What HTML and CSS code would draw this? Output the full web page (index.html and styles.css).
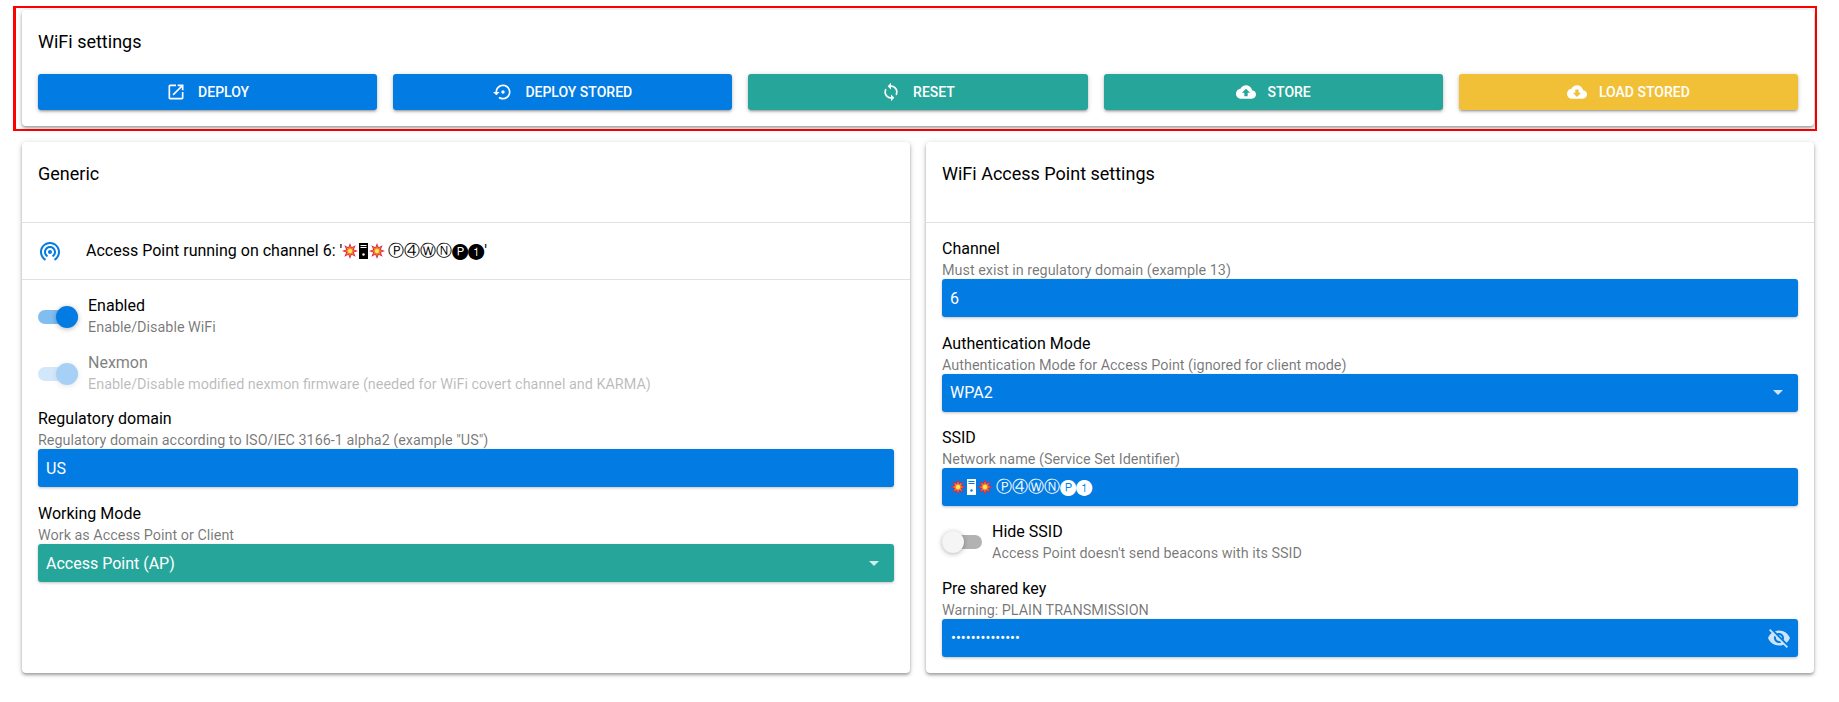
FILE: index.html
```html
<!DOCTYPE html>
<html lang="en">
<head>
  <meta charset="UTF-8">
  <meta name="viewport" content="width=device-width, initial-scale=1.0">
  <title>WiFi settings</title>
  <link rel="stylesheet" href="styles.css">
</head>
<body>
  <svg class="defs" aria-hidden="true">
    <symbol id="boom" viewBox="0 0 16 16">
      <polygon fill="#e02a4e" points="8,0 9.6,4.2 13.7,2.3 11.8,6.4 16,8 11.8,9.6 13.7,13.7 9.6,11.8 8,16 6.4,11.8 2.3,13.7 4.2,9.6 0,8 4.2,6.4 2.3,2.3 6.4,4.2"/>
      <polygon fill="#f58a1f" points="8,2.5 9,5.5 11.9,4.1 10.5,7 13.5,8 10.5,9 11.9,11.9 9,10.5 8,13.5 7,10.5 4.1,11.9 5.5,9 2.5,8 5.5,7 4.1,4.1 7,5.5"/>
      <circle fill="#ffe45c" cx="8" cy="8" r="2.2"/>
    </symbol>
  </svg>

  <div class="highlight">
    <section class="card top-card">
      <h2 class="top-title">WiFi settings</h2>
      <div class="actions">
        <button class="btn primary">
          <svg viewBox="0 0 24 24"><path d="M19 19H5V5h7V3H5c-1.11 0-2 .9-2 2v14c0 1.1.89 2 2 2h14c1.1 0 2-.9 2-2v-7h-2v7zM14 3v2h3.59l-9.83 9.83 1.41 1.41L19 6.41V10h2V3h-7z"/></svg>
          Deploy
        </button>
        <button class="btn primary">
          <svg viewBox="0 0 24 24"><path d="M14 12c0-1.1-.9-2-2-2s-2 .9-2 2 .9 2 2 2 2-.9 2-2zm-2-9c-4.97 0-9 4.03-9 9H0l4 4 4-4H5c0-3.87 3.13-7 7-7s7 3.13 7 7-3.13 7-7 7c-1.51 0-2.91-.49-4.06-1.3l-1.42 1.44C8.04 20.3 9.94 21 12 21c4.97 0 9-4.03 9-9s-4.03-9-9-9z"/></svg>
          Deploy Stored
        </button>
        <button class="btn secondary">
          <svg viewBox="0 0 24 24"><path d="M12 4V1L8 5l4 4V6c3.31 0 6 2.69 6 6 0 1.01-.25 1.97-.7 2.8l1.46 1.46C19.54 15.03 20 13.57 20 12c0-4.42-3.58-8-8-8zm0 14c-3.31 0-6-2.69-6-6 0-1.01.25-1.97.7-2.8L5.24 7.74C4.46 8.97 4 10.43 4 12c0 4.42 3.58 8 8 8v3l4-4-4-4v3z"/></svg>
          Reset
        </button>
        <button class="btn secondary">
          <svg viewBox="0 0 24 24"><path d="M19.35 10.04C18.67 6.59 15.64 4 12 4 9.11 4 6.6 5.64 5.35 8.04 2.34 8.36 0 10.91 0 14c0 3.31 2.69 6 6 6h13c2.76 0 5-2.24 5-5 0-2.64-2.05-4.78-4.65-4.96zM14 13v4h-4v-4H7l5-5 5 5h-3z"/></svg>
          Store
        </button>
        <button class="btn warning">
          <svg viewBox="0 0 24 24"><path d="M19.35 10.04C18.67 6.59 15.64 4 12 4 9.11 4 6.6 5.64 5.35 8.04 2.34 8.36 0 10.91 0 14c0 3.31 2.69 6 6 6h13c2.76 0 5-2.24 5-5 0-2.64-2.05-4.78-4.65-4.96zM17 13l-5 5-5-5h3V9h4v4h3z"/></svg>
          Load Stored
        </button>
      </div>
    </section>
  </div>

  <div class="columns">
    <section class="card">
      <h2 class="card-title">Generic</h2>
      <div class="status-row">
        <svg class="status-icon" viewBox="0 0 24 24"><path d="M12 11c-1.1 0-2 .9-2 2s.9 2 2 2 2-.9 2-2-.9-2-2-2zm6 2c0-3.31-2.69-6-6-6s-6 2.69-6 6c0 2.22 1.21 4.15 3 5.19l1-1.74c-1.19-.7-2-1.97-2-3.45 0-2.21 1.79-4 4-4s4 1.79 4 4c0 1.48-.81 2.75-2 3.45l1 1.74c1.79-1.04 3-2.97 3-5.19zM12 3C6.48 3 2 7.48 2 13c0 3.7 2.01 6.92 4.99 8.65l1-1.73C5.61 18.53 4 15.96 4 13c0-4.42 3.58-8 8-8s8 3.58 8 8c0 2.96-1.61 5.53-4 6.92l1 1.73c2.99-1.73 5-4.95 5-8.65 0-5.52-4.48-10-10-10z"/></svg>
        <span>Access Point running on channel 6: '<svg class="boom" role="img" aria-label="💥"><use href="#boom"/></svg><svg class="tower" role="img" aria-label="🖥" viewBox="0 0 9 16"><rect width="9" height="16" fill="currentColor"/><path class="slots" d="M1.5 2h6v1h-6zM1.5 4h6v1h-6z"/><circle class="slots" cx="4.5" cy="11.5" r="1.2"/></svg><svg class="boom" role="img" aria-label="💥"><use href="#boom"/></svg> <span class="ssid-text">Ⓟ④ⓌⓃ🅟❶</span>'</span>
      </div>
      <div class="card-body left-body">
        <div class="toggle-row">
          <span class="toggle on"><span class="knob"></span></span>
          <div>
            <div class="label">Enabled</div>
            <div class="hint">Enable/Disable WiFi</div>
          </div>
        </div>
        <div class="toggle-row disabled">
          <span class="toggle on"><span class="knob"></span></span>
          <div>
            <div class="label">Nexmon</div>
            <div class="hint">Enable/Disable modified nexmon firmware (needed for WiFi covert channel and KARMA)</div>
          </div>
        </div>
        <div class="field field-tight">
          <div class="label">Regulatory domain</div>
          <div class="hint">Regulatory domain according to ISO/IEC 3166-1 alpha2 (example "US")</div>
          <div class="input primary"><input type="text" value="US"></div>
        </div>
        <div class="field">
          <div class="label">Working Mode</div>
          <div class="hint">Work as Access Point or Client</div>
          <div class="input secondary"><input type="text" value="Access Point (AP)"><span class="arrow"></span></div>
        </div>
      </div>
    </section>

    <section class="card">
      <h2 class="card-title">WiFi Access Point settings</h2>
      <div class="card-body">
        <div class="field">
          <div class="label">Channel</div>
          <div class="hint">Must exist in regulatory domain (example 13)</div>
          <div class="input primary"><input type="text" value="6"></div>
        </div>
        <div class="field">
          <div class="label">Authentication Mode</div>
          <div class="hint">Authentication Mode for Access Point (ignored for client mode)</div>
          <div class="input primary"><input type="text" value="WPA2"><span class="arrow"></span></div>
        </div>
        <div class="field">
          <div class="label">SSID</div>
          <div class="hint">Network name (Service Set Identifier)</div>
          <div class="input primary">
            <div class="value"><svg class="boom" role="img" aria-label="💥"><use href="#boom"/></svg><svg class="tower" role="img" aria-label="🖥" viewBox="0 0 9 16"><rect width="9" height="16" fill="currentColor"/><path class="slots" d="M1.5 2h6v1h-6zM1.5 4h6v1h-6z"/><circle class="slots" cx="4.5" cy="11.5" r="1.2"/></svg><svg class="boom" role="img" aria-label="💥"><use href="#boom"/></svg> <span class="ssid-text">Ⓟ④ⓌⓃ🅟❶</span></div>
          </div>
        </div>
        <div class="toggle-row">
          <span class="toggle"><span class="knob"></span></span>
          <div>
            <div class="label">Hide SSID</div>
            <div class="hint">Access Point doesn't send beacons with its SSID</div>
          </div>
        </div>
        <div class="field">
          <div class="label">Pre shared key</div>
          <div class="hint">Warning: PLAIN TRANSMISSION</div>
          <div class="input primary">
            <input class="secret" type="password" value="aaaaaaaaaaaaaa">
            <svg class="eye" viewBox="0 0 24 24"><path d="M12 7c2.76 0 5 2.24 5 5 0 .65-.13 1.26-.36 1.83l2.92 2.92c1.51-1.26 2.7-2.89 3.43-4.75-1.73-4.39-6-7.5-11-7.5-1.4 0-2.74.25-3.98.7l2.16 2.16C10.74 7.13 11.35 7 12 7zM2 4.27l2.28 2.28.46.46C3.08 8.3 1.78 10.02 1 12c1.73 4.39 6 7.5 11 7.5 1.55 0 3.03-.3 4.38-.84l.42.42L19.73 22 21 20.73 3.27 3 2 4.27zM7.53 9.8l1.55 1.55c-.05.21-.08.43-.08.65 0 1.66 1.34 3 3 3 .22 0 .44-.03.65-.08l1.55 1.55c-.67.33-1.41.53-2.2.53-2.76 0-5-2.24-5-5 0-.79.2-1.53.53-2.2zm4.31-.78l3.15 3.15.02-.16c0-1.66-1.34-3-3-3l-.17.01z"/></svg>
          </div>
        </div>
      </div>
    </section>
  </div>
</body>
</html>
```

FILE: styles.css
```css
* { box-sizing: border-box; }
body { margin: 0; padding-bottom: 29px; font-family: Roboto, "Noto Sans", sans-serif; font-size: 14px; color: #000; background: #fff; }
.defs { display: none; }

.highlight { margin: 6px 22px 0 13px; padding: 2px 1px 3px 6px; border: 2px solid #f00; border-left-width: 3px; }
.card { background: #fff; border-radius: 4px; box-shadow: 0 1px 6px rgba(0, 0, 0, .15), 0 2px 3px rgba(0, 0, 0, .3); }
.top-card { padding: 20px 16px 16px; }
.top-title { margin: 0 0 20px; font-size: 18px; font-weight: 400; line-height: 24px; }

.actions { display: grid; grid-template-columns: repeat(5, 1fr); gap: 16px; }
.btn { display: flex; align-items: center; justify-content: center; gap: 12px; height: 36px; border: none; border-radius: 3px; color: #fff; font: 500 14px Roboto, sans-serif; text-transform: uppercase; cursor: pointer; box-shadow: 0 1px 5px rgba(0, 0, 0, .2), 0 2px 2px rgba(0, 0, 0, .14), 0 3px 1px -2px rgba(0, 0, 0, .12); }
.btn svg { width: 20px; height: 20px; fill: #fff; }
.primary { background: #027be3; }
.secondary { background: #26a69a; }
.warning { background: #f2c037; }

.columns { display: grid; grid-template-columns: 1fr 1fr; gap: 16px; margin: 11px 25px 0 22px; }
.columns .card { height: 531px; }
.card-title { margin: 0; padding: 20px 16px 0; height: 81px; font-size: 18px; font-weight: 400; line-height: 24px; border-bottom: 1px solid #e0e0e0; }

.status-row { display: flex; align-items: center; gap: 24px; height: 57px; padding: 0 16px; font-size: 16px; border-bottom: 1px solid #e0e0e0; }
.status-icon { width: 24px; height: 24px; fill: #027be3; }

.card-body { padding: 13px 16px; display: flex; flex-direction: column; gap: 13.5px; }
.left-body { padding-top: 14px; gap: 14px; }
.field-tight { margin-top: -2px; }

.label { font-size: 16px; line-height: 24px; }
.hint { font-size: 14.4px; line-height: 19px; color: rgba(0, 0, 0, .54); }
.field .label { padding-top: 1px; }
.field .hint { margin-bottom: -1px; }

.boom { width: 16px; height: 16px; margin: 0 -.5px; vertical-align: -3px; }
.tower { width: 9px; height: 16px; margin: 0 1.5px; vertical-align: -3px; color: #000; }
.tower .slots { fill: #fff; }
.ssid-text { font-size: 15.5px; }
.value .tower { color: #fff; }
.value .tower .slots { fill: #027be3; }

.toggle-row { display: flex; align-items: center; gap: 10px; }
.toggle-row.disabled .label, .toggle-row.disabled .hint { opacity: .5; }
.toggle-row.disabled .toggle { opacity: .35; }
.toggle { position: relative; display: block; width: 40px; height: 14px; margin-top: 2px; border-radius: 7px; background: rgba(0, 0, 0, .3); }
.toggle.on { background: rgba(2, 123, 227, .5); }
.knob { position: absolute; top: -4px; left: 0; width: 22px; height: 22px; border-radius: 50%; background: #f5f5f5; box-shadow: 0 1px 5px rgba(0, 0, 0, .3); }
.toggle.on .knob { left: auto; right: 0; background: #027be3; }

.input { display: flex; align-items: center; height: 38px; border-radius: 3px; box-shadow: 0 1px 3px rgba(0, 0, 0, .25); }
.input input { flex: 1; min-width: 0; height: 100%; padding: 0 8px; border: none; outline: none; background: transparent; color: #fff; font: 16px Roboto, "Noto Sans", sans-serif; }
.input input.secret { padding-left: 9px; font-size: 14.6px; }
.value { padding: 0 8px; color: #fff; font-size: 16px; }
.arrow { width: 0; height: 0; margin-right: 15px; border-left: 5px solid transparent; border-right: 5px solid transparent; border-top: 5px solid rgba(255, 255, 255, .8); }
.eye { width: 24px; height: 24px; margin-right: 7px; fill: rgba(255, 255, 255, .8); }
```
